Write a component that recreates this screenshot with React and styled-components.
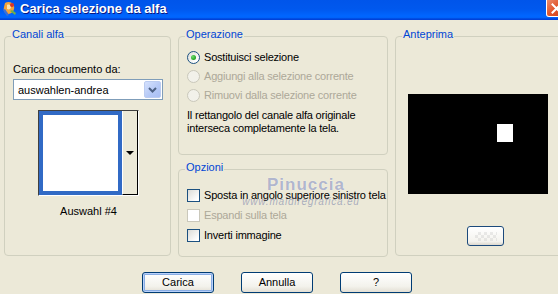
import React from 'react'
import styled, { createGlobalStyle } from 'styled-components'

const GlobalStyle = createGlobalStyle`
  html, body {
    margin: 0;
    padding: 0;
    background: #ECE9D8;
    overflow: hidden;
  }
  body {
    font-family: "Liberation Sans", Arial, sans-serif;
    font-size: 11px;
    color: #000;
  }
`

const App = () => {
    return (
        <Window>
            <GlobalStyle />
            <TitleBar>
                <AppIcon />
                <Title>Carica selezione da alfa</Title>
                <CloseButton>
                    <svg width="11" height="11" viewBox="0 0 11 11">
                        <path d="M1.5 1.5 L9.5 9.5 M9.5 1.5 L1.5 9.5" stroke="#fff" strokeWidth="2" strokeLinecap="square" />
                    </svg>
                </CloseButton>
            </TitleBar>

            <Main>
                <Group $h={228}>
                    <Legend>Canali alfa</Legend>
                    <GroupBody $pad="18px 0 0 8px">
                        <Label>Carica documento da:</Label>
                        <Combo>
                            <span>auswahlen-andrea</span>
                            <ComboButton>
                                <svg width="9" height="6" viewBox="0 0 9 6">
                                    <path d="M1 1 L4.5 4.5 L8 1" stroke="#4D6185" strokeWidth="2" fill="none" />
                                </svg>
                            </ComboButton>
                        </Combo>
                        <Thumb>
                            <ThumbImage />
                            <ThumbDrop>
                                <Triangle />
                            </ThumbDrop>
                        </Thumb>
                        <Caption>Auswahl #4</Caption>
                    </GroupBody>
                </Group>

                <Column>
                    <Group $h={127}>
                        <Legend>Operazione</Legend>
                        <GroupBody $pad="3px 0 0 8px">
                            <OptionRow>
                                <Radio $checked />
                                <OptionText>Sostituisci selezione</OptionText>
                            </OptionRow>
                            <OptionRow>
                                <Radio $disabled />
                                <OptionText $disabled>Aggiungi alla selezione corrente</OptionText>
                            </OptionRow>
                            <OptionRow>
                                <Radio $disabled />
                                <OptionText $disabled>Rimuovi dalla selezione corrente</OptionText>
                            </OptionRow>
                            <Note>
                                Il rettangolo del canale alfa originale<br />
                                interseca completamente la tela.
                            </Note>
                        </GroupBody>
                    </Group>

                    <Group $h={96}>
                        <Legend>Opzioni</Legend>
                        <GroupBody $pad="7px 0 0 8px">
                            <OptionRow $h={20}>
                                <Check />
                                <OptionText>Sposta in angolo superiore sinistro tela</OptionText>
                            </OptionRow>
                            <OptionRow $h={20}>
                                <Check $disabled />
                                <OptionText $disabled>Espandi sulla tela</OptionText>
                            </OptionRow>
                            <OptionRow $h={20}>
                                <Check />
                                <OptionText>Inverti immagine</OptionText>
                            </OptionRow>
                        </GroupBody>
                        <Watermark>
                            <span className="name">Pinuccia</span>
                            <span className="site">www.maidiregrafica.eu</span>
                        </Watermark>
                    </Group>
                </Column>

                <Group $h={228}>
                    <Legend>Anteprima</Legend>
                    <GroupBody $pad="49px 0 0 12px">
                        <Preview>
                            <PreviewMark />
                        </Preview>
                        <SmallButton>
                            <Checker />
                        </SmallButton>
                    </GroupBody>
                </Group>
            </Main>

            <ButtonRow>
                <Button $default>Carica</Button>
                <Button>Annulla</Button>
                <Button>?</Button>
            </ButtonRow>
        </Window>
    )
}

const AppIcon = () => (
    <svg width="15" height="16" viewBox="0 0 15 16">
        <path d="M3 2 C6 0 11 1 12 5 C13 9 10 13 6 13 C3 13 1 10 2 6 Z" fill="#F2A33A" />
        <path d="M5 4 C7 3 9 4 9 6 C9 8 7 9 5 8 Z" fill="#FBE3B0" />
        <path d="M1 9 L5 15 L7 14 L3 8 Z" fill="#3A6FD8" />
        <circle cx="10" cy="4" r="2" fill="#D8352A" />
        <path d="M8 10 L13 14 L14 12 L10 9 Z" fill="#6BB04A" />
    </svg>
)

export default App

const Window = styled.div`
    width: 570px;
    height: 294px;
`

const TitleBar = styled.div`
    height: 20px;
    display: flex;
    align-items: flex-start;
    padding: 1px 3px 0 2px;
    box-sizing: border-box;
    background: linear-gradient(to bottom, #0055EA 0%, #0058EE 45%, #0066FF 80%, #0063FA 88%, #0048DD 94%, #003DD7 100%);
`

const Title = styled.span`
    margin-left: 3px;
    color: #fff;
    font-weight: bold;
    font-size: 13px;
    line-height: 16px;
    text-shadow: 1px 1px #0A1883;
    flex: 1;
`

const CloseButton = styled.div`
    width: 21px;
    height: 17px;
    margin-top: -1px;
    box-sizing: border-box;
    border: 1px solid #fff;
    border-top: none;
    border-radius: 0 0 3px 3px;
    background: linear-gradient(135deg, #E98C6E 0%, #E2572C 45%, #C8401C 100%);
    display: flex;
    align-items: center;
    justify-content: center;
`

const Main = styled.div`
    display: grid;
    grid-template-columns: 167px 210px 176px;
    column-gap: 7px;
    padding: 8px 0 0 4px;
`

const Column = styled.div`
    display: flex;
    flex-direction: column;
    gap: 6px;
`

const Group = styled.fieldset`
    margin: 0;
    padding: 0;
    min-width: 0;
    height: ${p => p.$h}px;
    box-sizing: border-box;
    border: 1px solid #D0D0BF;
    border-radius: 4px;
    position: relative;
`

const Legend = styled.legend`
    color: #0046D5;
    font-size: 11px;
    line-height: 13px;
    margin-left: 6px;
    padding: 0 1px 4px;
`

const GroupBody = styled.div`
    padding: ${p => p.$pad};
    display: flex;
    flex-direction: column;
    align-items: flex-start;
`

const Label = styled.div`
    line-height: 13px;
`

const Combo = styled.div`
    margin-top: 3px;
    width: 150px;
    height: 21px;
    box-sizing: border-box;
    border: 1px solid #7F9DB9;
    background: #fff;
    display: flex;
    align-items: center;
    justify-content: space-between;
    padding: 0 1px 0 4px;
`

const ComboButton = styled.div`
    width: 17px;
    height: 17px;
    box-sizing: border-box;
    border: 1px solid #BBCCF1;
    border-radius: 2px;
    background: linear-gradient(135deg, #D5E1FD 0%, #B4C8F6 60%, #A9BFF4 100%);
    display: flex;
    align-items: center;
    justify-content: center;
`

const Thumb = styled.div`
    margin: 10px 0 0 25px;
    width: 101px;
    height: 86px;
    box-sizing: border-box;
    display: flex;
    border-top: 1px solid #404040;
    border-left: 1px solid #404040;
    border-bottom: 1px solid #fff;
    border-right: 1px solid #fff;
`

const ThumbImage = styled.div`
    width: 83px;
    box-sizing: border-box;
    border: 4px solid #316AC5;
    background: #fff;
`

const ThumbDrop = styled.div`
    flex: 1;
    box-sizing: border-box;
    border-left: 1px solid #fff;
    border-right: 1px solid #000;
    border-bottom: 1px solid #000;
    background: #ECE9D8;
    display: flex;
    align-items: center;
    justify-content: center;
`

const Triangle = styled.div`
    width: 0;
    height: 0;
    border-left: 4px solid transparent;
    border-right: 4px solid transparent;
    border-top: 4px solid #000;
`

const Caption = styled.div`
    margin: 9px 0 0 25px;
    width: 101px;
    text-align: center;
    line-height: 13px;
`

const OptionRow = styled.div`
    height: ${p => p.$h || 19}px;
    display: flex;
    align-items: center;
    gap: 4px;
`

const OptionText = styled.span`
    line-height: 13px;
    letter-spacing: -0.2px;
    white-space: nowrap;
    color: ${p => (p.$disabled ? '#ACA899' : '#000')};
`

const Radio = styled.span`
    width: 13px;
    height: 13px;
    box-sizing: border-box;
    border-radius: 50%;
    border: 1px solid ${p => (p.$disabled ? '#CAC8BB' : '#1C5180')};
    background: ${p => (p.$disabled ? '#F2F1EA' : 'linear-gradient(135deg, #DCDCD7 0%, #FFFFFF 80%)')};
    display: flex;
    align-items: center;
    justify-content: center;
    &::after {
        content: '';
        display: ${p => (p.$checked ? 'block' : 'none')};
        width: 5px;
        height: 5px;
        border-radius: 50%;
        background: radial-gradient(circle at 35% 35%, #6EDD6E, #21A121 70%);
    }
`

const Check = styled.span`
    width: 13px;
    height: 13px;
    box-sizing: border-box;
    border: 1px solid ${p => (p.$disabled ? '#CAC8BB' : '#1C5180')};
    background: ${p => (p.$disabled ? '#fff' : 'linear-gradient(135deg, #DCDCD7 0%, #FFFFFF 85%)')};
`

const Note = styled.div`
    margin-top: 4px;
    line-height: 13px;
    letter-spacing: -0.2px;
`

const Watermark = styled.div`
    position: absolute;
    left: 58px;
    top: -3px;
    width: 128px;
    display: flex;
    flex-direction: column;
    align-items: center;
    pointer-events: none;
    color: rgba(110, 120, 165, 0.55);

    .name {
        font-size: 17px;
        line-height: 20px;
        letter-spacing: 1px;
        font-weight: bold;
        text-shadow: 0 0 1px #fff;
        margin-left: 10px;
    }
    .site {
        margin-top: 1px;
        font-size: 10px;
        line-height: 12px;
        font-style: italic;
        letter-spacing: 0.8px;
    }
`

const Preview = styled.div`
    width: 140px;
    height: 100px;
    background: #000;
    position: relative;
`

const PreviewMark = styled.div`
    position: absolute;
    left: 89px;
    top: 30px;
    width: 16px;
    height: 18px;
    background: #fff;
`

const SmallButton = styled.div`
    margin: 32px 0 0 59px;
    width: 37px;
    height: 20px;
    box-sizing: border-box;
    border: 1px solid #1C4A7C;
    border-radius: 3px;
    background: linear-gradient(to bottom, #FFFFFF 0%, #F4F3EE 80%, #DCD8CE 100%);
    display: flex;
    align-items: center;
    justify-content: center;
`

const Checker = styled.div`
    width: 22px;
    height: 9px;
    opacity: 0.35;
    background:
        linear-gradient(45deg, #C8C8C8 25%, transparent 25%, transparent 75%, #C8C8C8 75%),
        linear-gradient(45deg, #C8C8C8 25%, transparent 25%, transparent 75%, #C8C8C8 75%);
    background-size: 6px 6px;
    background-position: 0 0, 3px 3px;
`

const ButtonRow = styled.div`
    display: flex;
    gap: 27px;
    margin-top: 15px;
    padding-left: 142px;
`

const Button = styled.div`
    width: 72px;
    height: 21px;
    box-sizing: border-box;
    border: 1px solid #003C74;
    border-radius: 3px;
    background: linear-gradient(to bottom, #FFFFFF 0%, #F3F2EC 70%, #E3DFD4 100%);
    display: flex;
    align-items: center;
    justify-content: center;
    line-height: 13px;
    box-shadow: ${p => (p.$default ? 'inset 0 0 0 1px #B9D1FA, inset 0 0 0 2px #89ADE4' : 'none')};
`
